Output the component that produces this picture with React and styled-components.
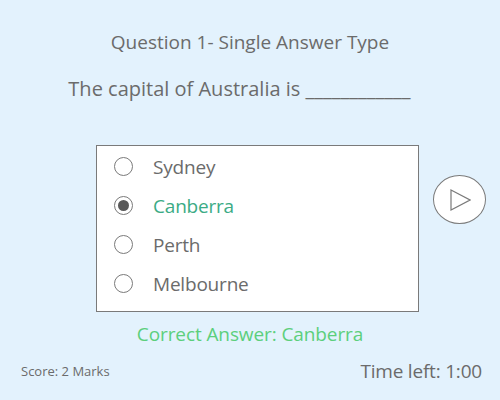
import React from "react";
import styled, { createGlobalStyle } from "styled-components";

const Global = createGlobalStyle`
  html, body { margin: 0; padding: 0; background: #e3f2fd; }
  * { box-sizing: border-box; }
`;

const Page = styled.div`
  width: 500px;
  height: 400px;
  background: #e3f2fd;
  font-family: "Open Sans", "Noto Sans", sans-serif;
  color: #6b6b6b;
  display: flex;
  flex-direction: column;
  align-items: center;
  padding-top: 29px;
`;

const Title = styled.div`
  font-size: 19px;
  line-height: 26px;
`;

const Prompt = styled.div`
  margin-top: 21px;
  margin-right: 21px;
  font-size: 20px;
  line-height: 26px;
`;

const QuizRow = styled.div`
  margin-top: 43px;
  width: 500px;
  display: flex;
  align-items: flex-start;
  padding-left: 96px;
`;

const OptionBox = styled.div`
  width: 323px;
  height: 167px;
  background: #fff;
  border: 1px solid #7a7a7a;
  display: flex;
  flex-direction: column;
  padding: 1px 0 0 17px;
`;

const Option = styled.label`
  height: 39px;
  display: flex;
  align-items: center;
  gap: 20px;
  font-size: 19px;
  letter-spacing: -0.2px;
  color: ${(p) => (p.$selected ? "#3bab85" : "#6b6b6b")};
`;

const Radio = styled.span`
  width: 19px;
  height: 19px;
  border-radius: 50%;
  border: 1px solid #7a7a7a;
  display: flex;
  align-items: center;
  justify-content: center;
  &::after {
    content: "";
    width: 11px;
    height: 11px;
    border-radius: 50%;
    background: ${(p) => (p.$checked ? "#5a5a5a" : "transparent")};
  }
`;

const PlayButton = styled.button`
  margin: 30px 0 0 14px;
  width: 53px;
  height: 49px;
  border-radius: 50%;
  border: 1px solid #7a7a7a;
  background: #fff;
  padding: 0;
  display: flex;
  align-items: center;
  justify-content: center;
`;

const Correct = styled.div`
  margin-top: 9px;
  font-size: 19px;
  line-height: 26px;
  color: #5ccf7c;
  letter-spacing: -0.1px;
`;

const Footer = styled.div`
  width: 500px;
  margin-top: 11px;
  display: flex;
  justify-content: space-between;
  align-items: center;
  padding: 0 18px 0 21px;
`;

const Score = styled.div`
  font-size: 13px;
`;

const Timer = styled.div`
  font-size: 19px;
  letter-spacing: -0.2px;
`;

const options = ["Sydney", "Canberra", "Perth", "Melbourne"];

export default function App() {
  return (
    <Page>
      <Global />
      <Title>Question 1- Single Answer Type</Title>
      <Prompt>The capital of Australia is ____________</Prompt>
      <QuizRow>
        <OptionBox>
          {options.map((o) => (
            <Option key={o} $selected={o === "Canberra"}>
              <Radio $checked={o === "Canberra"} />
              {o}
            </Option>
          ))}
        </OptionBox>
        <PlayButton aria-label="next">
          <svg width="22" height="22" viewBox="0 0 22 22">
            <path d="M2 1 L21 11 L2 21 Z" fill="none" stroke="#7a7a7a" strokeWidth="1.2" strokeLinejoin="miter" />
          </svg>
        </PlayButton>
      </QuizRow>
      <Correct>Correct Answer: Canberra</Correct>
      <Footer>
        <Score>Score: 2 Marks</Score>
        <Timer>Time left: 1:00</Timer>
      </Footer>
    </Page>
  );
}
